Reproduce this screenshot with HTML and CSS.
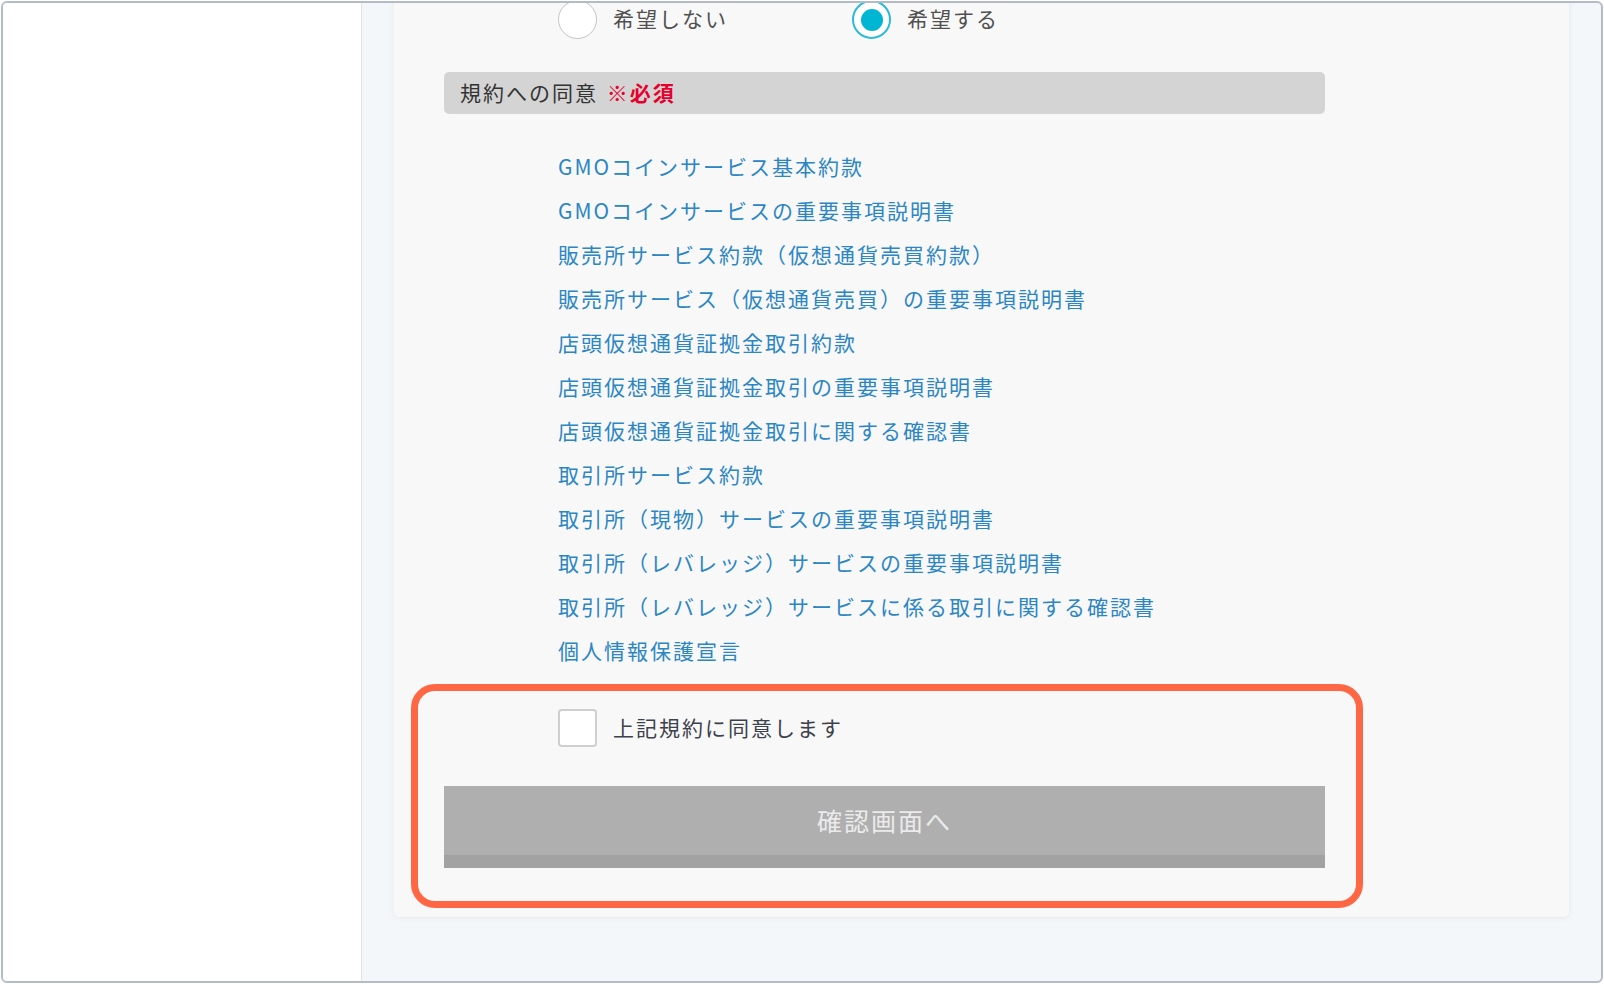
FILE: index.html
```html
<!DOCTYPE html>
<html lang="ja">
<head>
    <meta charset="UTF-8">
    <meta name="viewport" content="width=device-width, initial-scale=1.0">
    <title>口座開設 - 規約への同意</title>
    <link rel="stylesheet" href="styles.css">
</head>
<body>
    <div class="frame">
        <aside class="sidebar"></aside>

        <main class="main">
            <div class="card">
                <div class="radio-row">
                    <label class="radio-option">
                        <span class="radio"></span>
                        <span class="radio-label">希望しない</span>
                    </label>
                    <label class="radio-option">
                        <span class="radio checked"></span>
                        <span class="radio-label">希望する</span>
                    </label>
                </div>

                <div class="section-title">規約への同意 <span class="required">※必須</span></div>

                <ul class="terms-list">
                    <li><a href="#">GMOコインサービス基本約款</a></li>
                    <li><a href="#">GMOコインサービスの重要事項説明書</a></li>
                    <li><a href="#">販売所サービス約款（仮想通貨売買約款）</a></li>
                    <li><a href="#">販売所サービス（仮想通貨売買）の重要事項説明書</a></li>
                    <li><a href="#">店頭仮想通貨証拠金取引約款</a></li>
                    <li><a href="#">店頭仮想通貨証拠金取引の重要事項説明書</a></li>
                    <li><a href="#">店頭仮想通貨証拠金取引に関する確認書</a></li>
                    <li><a href="#">取引所サービス約款</a></li>
                    <li><a href="#">取引所（現物）サービスの重要事項説明書</a></li>
                    <li><a href="#">取引所（レバレッジ）サービスの重要事項説明書</a></li>
                    <li><a href="#">取引所（レバレッジ）サービスに係る取引に関する確認書</a></li>
                    <li><a href="#">個人情報保護宣言</a></li>
                </ul>

                <div class="agree-block">
                    <label class="agree-row">
                        <span class="checkbox"></span>
                        <span class="agree-label">上記規約に同意します</span>
                    </label>
                    <button class="submit-btn" disabled>確認画面へ</button>
                    <!-- annotation frame -->
                    <div class="highlight"></div>
                </div>
            </div>
        </main>
    </div>
</body>
</html>
```

FILE: styles.css
```css
* {
    margin: 0;
    padding: 0;
    box-sizing: border-box;
}

body {
    font-family: "Noto Sans CJK JP", "Noto Sans", sans-serif;
    background: #ffffff;
    color: #444;
    padding: 1px;
}

.frame {
    display: flex;
    height: 982px;
    border: 2px solid #b3bbc7;
    border-radius: 6px;
    overflow: hidden;
    background: #f4f7fa;
}

.sidebar {
    width: 359px;
    flex-shrink: 0;
    background: #ffffff;
    border-right: 1px solid #dfe3e8;
}

.main {
    flex: 1;
    padding: 0 32px;
}

.card {
    margin-top: -40px;
    padding: 37px 50px 49px;
    background: #f8f8f8;
    border-radius: 5px;
    box-shadow: 0 1px 6px rgba(0, 0, 0, 0.06);
}

.radio-row {
    display: flex;
    padding-left: 114px;
    height: 39px;
}

.radio-option {
    display: flex;
    align-items: center;
    gap: 16px;
    width: 294px;
    font-size: 21px;
    letter-spacing: 2px;
    color: #505050;
}

.radio-label {
    margin-bottom: 4px;
}

.radio {
    width: 39px;
    height: 39px;
    border-radius: 50%;
    background: #fff;
    border: 1.5px solid #c4c4c4;
    display: flex;
    align-items: center;
    justify-content: center;
}

.radio.checked {
    border: 2px solid #2bbbd8;
}

.radio.checked::after {
    content: '';
    width: 22px;
    height: 22px;
    border-radius: 50%;
    background: #00b6d3;
}

.section-title {
    margin-top: 33px;
    max-width: 881px;
    height: 42px;
    line-height: 40px;
    padding: 0 0 2px 16px;
    background: #d4d4d4;
    border-radius: 5px;
    font-size: 21px;
    letter-spacing: 2px;
    color: #333;
}

.required {
    color: #e5002d;
    font-weight: bold;
    margin-left: 2px;
}

.terms-list {
    list-style: none;
    margin-top: 30px;
    padding-left: 114px;
}

.terms-list li {
    line-height: 44px;
    font-size: 21px;
    letter-spacing: 2px;
}

.terms-list a {
    color: #2c86c4;
    text-decoration: none;
}

.agree-block {
    position: relative;
    margin-top: 37px;
    max-width: 881px;
}

.agree-row {
    display: flex;
    align-items: center;
    gap: 16px;
    padding-left: 114px;
    height: 38px;
    font-size: 21px;
    letter-spacing: 2px;
    color: #3c424c;
}

.agree-label {
    margin-bottom: 2px;
}

.checkbox {
    width: 39px;
    height: 38px;
    background: #fff;
    border: 2px solid #cfcfcf;
    border-radius: 4px;
}

.submit-btn {
    display: block;
    width: 100%;
    margin-top: 39px;
    height: 82px;
    line-height: 69px;
    padding-bottom: 13px;
    background: #afafaf;
    border: none;
    border-bottom: 13px solid #a2a2a2;
    font-family: inherit;
    font-size: 25px;
    letter-spacing: 2px;
    color: #ebebeb;
    cursor: not-allowed;
}

.highlight {
    position: absolute;
    top: -25px;
    left: -33px;
    right: -38px;
    bottom: -40px;
    border: 7px solid #ff6744;
    border-radius: 24px;
    pointer-events: none;
}
```
